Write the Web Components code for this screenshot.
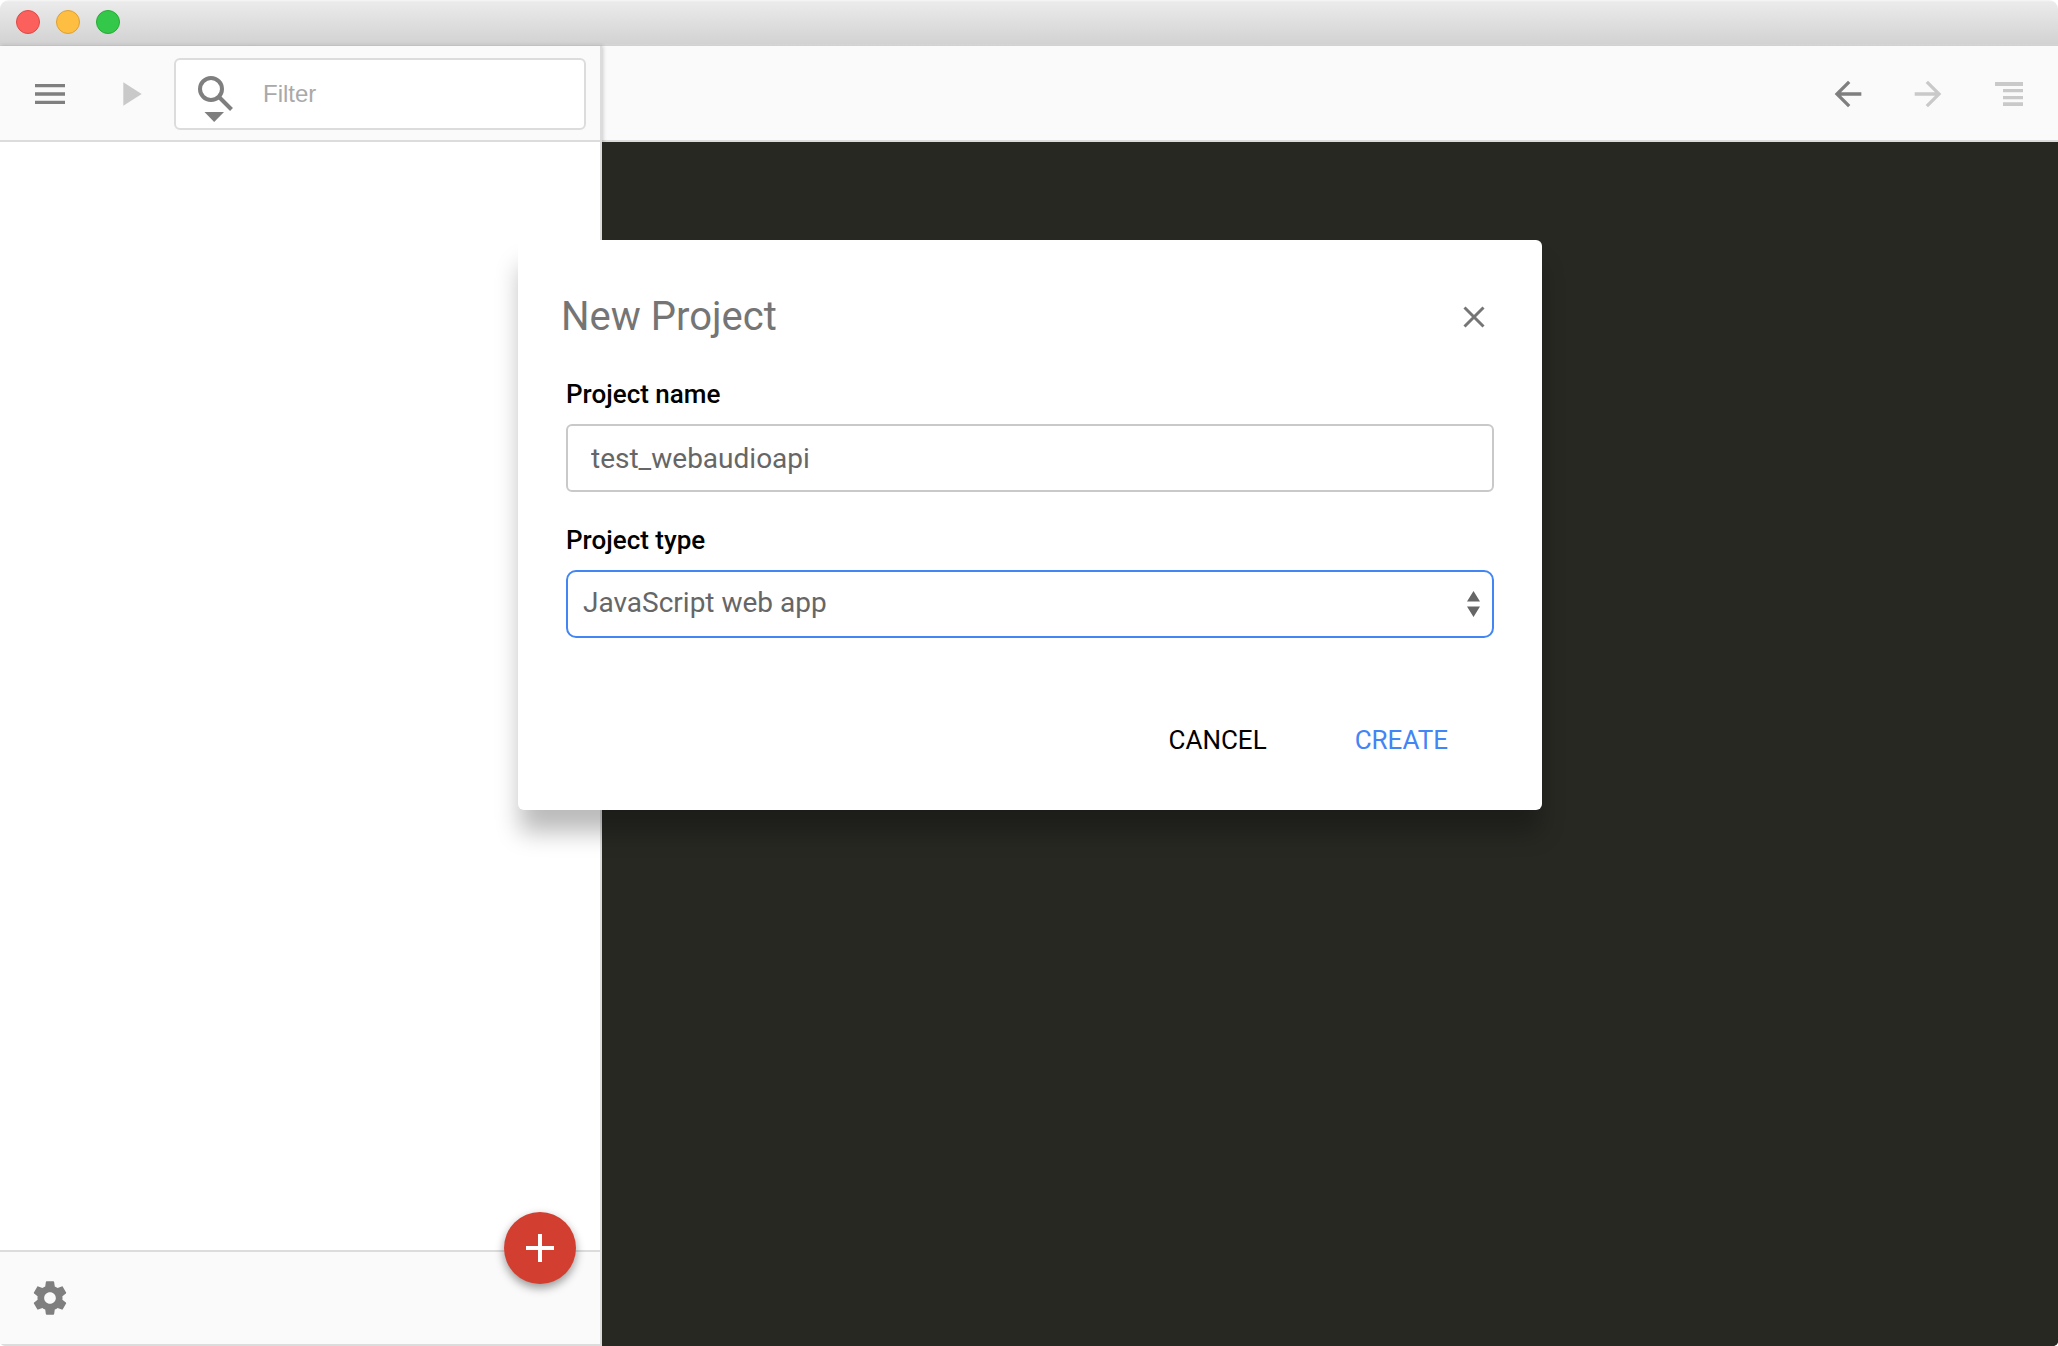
<!DOCTYPE html>
<html lang="en">
<head>
<meta charset="utf-8">
<title>New Project</title>
<style>
  html, body { margin: 0; height: 100%; background: #fff; font-family: Roboto, "Liberation Sans", sans-serif; }
</style>
</head>
<body>
<ide-window></ide-window>
<script>
const define = (name, html, setup) => {
  const tpl = document.createElement('template');
  tpl.innerHTML = html;
  customElements.define(name, class extends HTMLElement {
    constructor() {
      super();
      this.attachShadow({ mode: 'open' }).append(tpl.content.cloneNode(true));
    }
    connectedCallback() { if (setup) setup(this, this.shadowRoot); }
  });
};

define('icon-button', `
  <style>
    :host { display: block; color: #7f7f7f; }
    :host([muted]) { color: #c9c9c9; }
    button { display: flex; align-items: center; justify-content: center; width: 80px; height: 80px;
      margin: 0; padding: 0; border: 0; background: none; color: inherit; }
    ::slotted(svg) { display: block; width: 40px; height: 40px; fill: currentColor; }
  </style>
  <button type="button"><slot></slot></button>`,
  (el, root) => root.querySelector('button').setAttribute('aria-label', el.getAttribute('label')));

define('title-bar', `
  <style>
    :host { display: flex; align-items: center; gap: 16px; box-sizing: border-box; height: 46px; padding: 0 16px 2px;
      background: linear-gradient(#f6f6f6 0, #ebebeb 2px, #d2d2d2 44px, #d6d6d6 44px, #d0d0d0 46px); }
    i { box-sizing: border-box; width: 24px; height: 24px; border-radius: 50%; border: 1px solid; }
    .close { background: #fc605c; border-color: #df4744; }
    .min { background: #fdbe41; border-color: #de9f34; }
    .max { background: #34c84a; border-color: #27aa35; }
  </style>
  <i class="close"></i><i class="min"></i><i class="max"></i>`);

define('filter-box', `
  <style>
    :host { display: flex; align-items: center; box-sizing: border-box; height: 72px; flex: 1; min-width: 0;
      padding: 0 16px; gap: 20px; border: 2px solid #dcdcdc; border-radius: 6px; background: #fff; }
    svg { flex: none; width: 48px; height: 60px; }
    input { flex: 1; min-width: 0; padding: 0 0 0 3px; border: 0; outline: 0; background: none; color: #555;
      font: 24px/32px "Liberation Sans", sans-serif; }
    input::placeholder { color: #a9a9a9; opacity: 1; }
  </style>
  <svg viewBox="0 0 48 60" aria-hidden="true">
    <circle cx="19" cy="25" r="11" fill="none" stroke="#7f7f7f" stroke-width="4"/>
    <path d="M26.5 32.5l13 13" stroke="#7f7f7f" stroke-width="4" fill="none"/>
    <path d="M12.500 48h19.500l-9.800 10z" fill="#7f7f7f"/>
  </svg>
  <input type="text" placeholder="Filter" aria-label="Filter">`);

define('side-panel', `
  <style>
    :host { display: flex; flex-direction: column; flex: none; box-sizing: border-box; width: 602px;
      border-right: 2px solid #dcdcdc; background: #fff; position: relative; box-shadow: 1px 0 4px rgba(0,0,0,.2); }
    header { display: flex; align-items: center; box-sizing: border-box; height: 96px; padding: 0 14px 0 10px;
      background: #fafafa; box-shadow: inset 0 -2px #dcdcdc; }
    header filter-box { margin-left: 4px; }
    main { flex: 1; }
    footer { position: relative; display: flex; align-items: center; box-sizing: border-box; height: 96px;
      padding: 0 10px; background: #fafafa; border: solid #dcdcdc; border-width: 2px 0; }
    .add { position: absolute; right: 24px; top: -40px; display: flex; align-items: center; justify-content: center;
      width: 72px; height: 72px; padding: 0; border: 0; border-radius: 50%; background: #d23f31;
      box-shadow: 0 4px 10px rgba(0,0,0,.4); }
  </style>
  <header>
    <icon-button label="Menu"><svg viewBox="0 0 24 24"><path d="M3 18h18v-2H3v2zm0-5h18v-2H3v2zm0-7v2h18V6H3z"/></svg></icon-button>
    <icon-button label="Run" muted><svg viewBox="0 0 24 24"><path d="M8 5v14l11-7z"/></svg></icon-button>
    <filter-box></filter-box>
  </header>
  <main></main>
  <footer>
    <icon-button label="Settings"><svg viewBox="0 0 24 24"><path d="M19.430 12.980c.04-.32.07-.64.07-.98s-.03-.66-.07-.98l2.110-1.650c.19-.15.24-.42.12-.64l-2-3.460c-.12-.22-.39-.3-.61-.22l-2.490 1c-.52-.4-1.080-.73-1.690-.98l-.38-2.650C14.460 2.180 14.250 2 14 2h-4c-.25 0-.46.18-.49.42l-.38 2.650c-.61.25-1.170.59-1.690.98l-2.490-1c-.23-.09-.49 0-.61.22l-2 3.460c-.13.22-.07.49.12.64l2.110 1.650c-.04.32-.07.65-.07.98s.03.66.07.98l-2.110 1.650c-.19.15-.24.42-.12.64l2 3.460c.12.22.39.3.61.22l2.490-1c.52.4 1.080.73 1.690.98l.38 2.650c.03.24.24.42.49.42h4c.25 0 .46-.18.49-.42l.38-2.650c.61-.25 1.170-.59 1.690-.98l2.490 1c.23.09.49 0 .61-.22l2-3.460c.12-.22.07-.49-.12-.64l-2.110-1.650zM12 15.500c-1.930 0-3.500-1.570-3.500-3.500s1.570-3.500 3.500-3.500 3.500 1.570 3.500 3.500-1.570 3.500-3.500 3.500z"/></svg></icon-button>
    <button class="add" type="button" aria-label="Add">
      <svg width="28" height="28" viewBox="0 0 28 28"><path d="M12 0h4v12h12v4H16v12h-4V16H0v-4h12z" fill="#fff"/></svg>
    </button>
  </footer>`);

define('editor-pane', `
  <style>
    :host { display: flex; flex-direction: column; flex: 1; min-width: 0; background: #272822; }
    header { display: flex; align-items: center; justify-content: flex-end; box-sizing: border-box; height: 96px;
      padding: 0 10px; background: #fafafa; box-shadow: inset 0 -2px #dcdcdc; }
    main { flex: 1; background: #272822; position: relative; }
  </style>
  <header>
    <icon-button label="Back"><svg viewBox="0 0 24 24"><path d="M20 11H7.830l5.590-5.590L12 4l-8 8 8 8 1.410-1.410L7.830 13H20v-2z"/></svg></icon-button>
    <icon-button label="Forward" muted><svg viewBox="0 0 24 24"><path d="M12 4l-1.410 1.410L16.170 11H4v2h12.170l-5.580 5.590L12 20l8-8z"/></svg></icon-button>
    <icon-button label="Outline" muted><svg viewBox="0 0 40 40"><path d="M7 8h28v4H7zM15 15h20v3.300H15zM15 22h20v3.300H15zM15 28.300h20v3.700H15z"/></svg></icon-button>
  </header>
  <main></main>`);

const fieldCss = `
    :host { display: flex; flex-direction: column; gap: 14px; }
    label { font-size: 26px; line-height: 32px; font-weight: 500; color: #000; }
    input, select { display: block; box-sizing: border-box; width: 100%; height: 68px; margin: 0; outline: 0;
      font: 28px/36px Roboto, sans-serif; color: #666; background: #fff; }`;

define('text-field', `
  <style>${fieldCss}
    input { padding: 0 23px; border: 2px solid #c9c9c9; border-radius: 6px; }
  </style>
  <label for="f"><slot></slot></label>
  <input id="f" type="text">`,
  (el, root) => { root.querySelector('input').value = el.getAttribute('value'); });

define('select-field', `
  <style>${fieldCss}
    .box { display: grid; align-items: center; }
    .box > * { grid-area: 1 / 1; }
    select { appearance: none; padding: 0 48px 2px 15px; border: 2px solid #4285f4; border-radius: 10px; }
    svg { justify-self: end; margin-right: 14px; pointer-events: none; }
  </style>
  <label for="f"><slot></slot></label>
  <div class="box">
    <select id="f"><option>JavaScript web app</option></select>
    <svg width="13" height="26" viewBox="0 0 13 26" aria-hidden="true"><path d="M0 10.500L6.500 0 13 10.500zM0 15.500L6.500 26 13 15.500z" fill="#666"/></svg>
  </div>`);

define('flat-button', `
  <style>
    :host { display: block; color: #000; }
    :host([primary]) { color: #4285f4; }
    button { padding: 16px 0; border: 0; background: none; color: inherit; font: 26px/32px Roboto, sans-serif; }
  </style>
  <button type="button"><slot></slot></button>`);

define('project-dialog', `
  <style>
    :host { display: block; box-sizing: border-box; width: 1024px; max-width: 100%; padding: 36px 48px 38px;
      border-radius: 6px; background: #fff; box-shadow: 0 24px 24px -2px rgba(0,0,0,.27); }
    header { display: flex; align-items: center; justify-content: space-between; height: 82px; margin: 0 -20px 0 -5px; }
    h2 { margin: 0; font-size: 40px; line-height: 48px; font-weight: 400; color: #757575; }
    header icon-button { color: #757575; }
    form { display: flex; flex-direction: column; gap: 32px; padding-top: 20px; }
    footer { display: flex; justify-content: flex-end; gap: 88px; padding: 70px 46px 0; }
  </style>
  <header>
    <h2>New Project</h2>
    <icon-button label="Close"><svg viewBox="0 0 40 40"><path d="M10.500 10.500l19 19m0-19l-19 19" fill="none" stroke="currentColor" stroke-width="3"/></svg></icon-button>
  </header>
  <form>
    <text-field value="test_webaudioapi">Project name</text-field>
    <select-field>Project type</select-field>
  </form>
  <footer>
    <flat-button>CANCEL</flat-button>
    <flat-button primary>CREATE</flat-button>
  </footer>`);

define('ide-window', `
  <style>
    :host { display: flex; flex-direction: column; position: relative; min-height: 100vh; overflow: hidden;
      border-radius: 9px 9px 5px 5px; }
    .body { display: flex; flex: 1; }
    .overlay { position: absolute; inset: 0; display: flex; justify-content: center; align-items: flex-start; padding: 240px 0 0 2px; }
  </style>
  <title-bar></title-bar>
  <div class="body"><side-panel></side-panel><editor-pane></editor-pane></div>
  <div class="overlay"><project-dialog role="dialog" aria-label="New Project"></project-dialog></div>`);
</script>
</body>
</html>
